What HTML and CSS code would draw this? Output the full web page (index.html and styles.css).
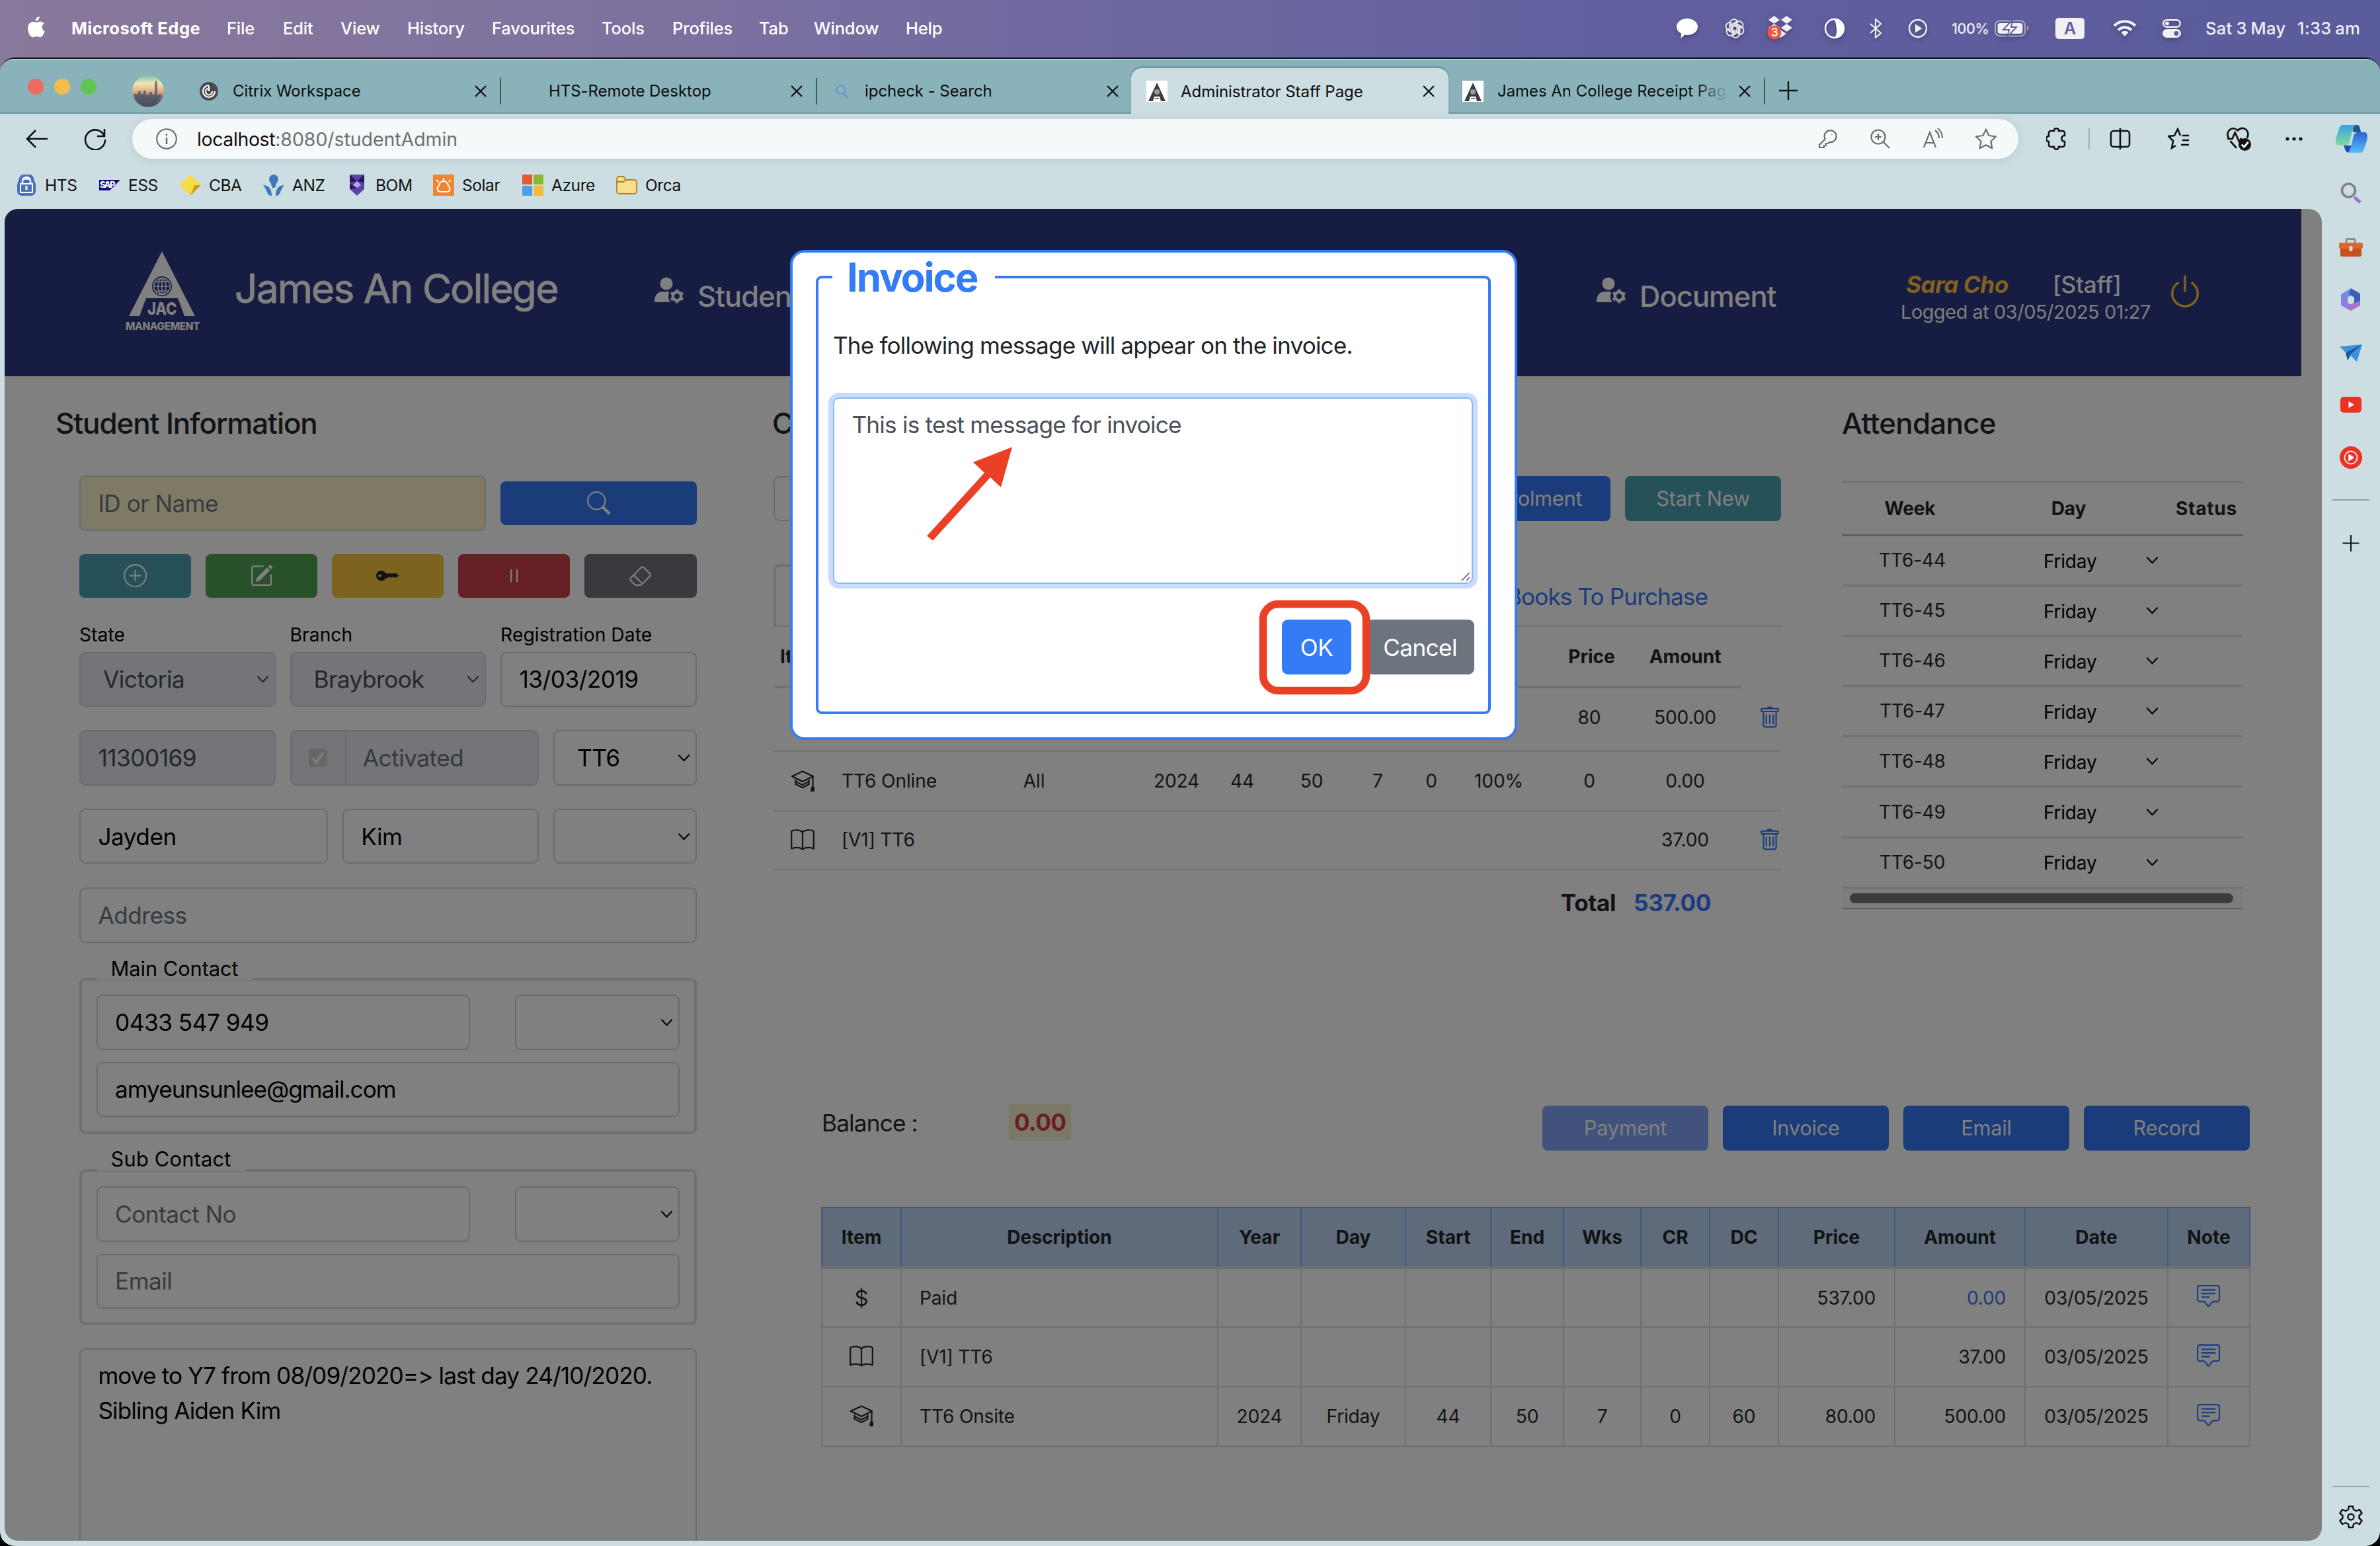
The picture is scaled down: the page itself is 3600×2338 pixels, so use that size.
FILE: index.html
```html
<!DOCTYPE html>
<html lang="en">
<head>
<meta charset="utf-8">
<title>Administrator Staff Page</title>
<link rel="stylesheet" href="styles.css">
</head>
<body>
<svg class="defs" width="0" height="0">
  <symbol id="chev" viewBox="0 0 20 12"><path d="M1.500 1.500 10 10.500 18.500 1.500" fill="none" stroke="currentColor" stroke-width="2.200"/></symbol>
  <symbol id="x" viewBox="0 0 18 18"><path d="M1 1 17 17M17 1 1 17" stroke="currentColor" stroke-width="2.200" fill="none"/></symbol>
  <symbol id="fav" viewBox="0 0 32 32"><path d="M0 0h32v32H0z" fill="#fff"/><path d="M16 3 29 31H22L20 24H12L10 31H3Z" fill="#3c3c3e"/><circle cx="16" cy="17" r="4" fill="#999"/><path d="M13 26h6v2h-6z" fill="#777"/></symbol>
  <symbol id="trash" viewBox="0 0 16 16"><path d="M5.500 5.500A.5.5 0 0 1 6 6v6a.5.5 0 0 1-1 0V6a.5.5 0 0 1 .5-.5zm2.500 0a.5.5 0 0 1 .5.5v6a.5.5 0 0 1-1 0V6a.5.5 0 0 1 .5-.5zm3 .5a.5.5 0 0 0-1 0v6a.5.5 0 0 0 1 0V6z"/><path fill-rule="evenodd" d="M14.500 3a1 1 0 0 1-1 1H13v9a2 2 0 0 1-2 2H5a2 2 0 0 1-2-2V4h-.5a1 1 0 0 1-1-1V2a1 1 0 0 1 1-1H6a1 1 0 0 1 1-1h2a1 1 0 0 1 1 1h3.500a1 1 0 0 1 1 1v1zM4.118 4 4 4.059V13a1 1 0 0 0 1 1h6a1 1 0 0 0 1-1V4.059L11.882 4H4.118zM2.500 3V2h11v1h-11z"/></symbol>
  <symbol id="chat" viewBox="0 0 16 16"><path d="M14 1a1 1 0 0 1 1 1v8a1 1 0 0 1-1 1h-2.500a2 2 0 0 0-1.600.8L8 14.333 6.100 11.800a2 2 0 0 0-1.600-.8H2a1 1 0 0 1-1-1V2a1 1 0 0 1 1-1h12zM2 0a2 2 0 0 0-2 2v8a2 2 0 0 0 2 2h2.500a1 1 0 0 1 .8.4l1.900 2.533a1 1 0 0 0 1.600 0l1.900-2.533a1 1 0 0 1 .8-.4H14a2 2 0 0 0 2-2V2a2 2 0 0 0-2-2H2z"/><path d="M3 3.500a.5.5 0 0 1 .5-.5h9a.5.5 0 0 1 0 1h-9a.5.5 0 0 1-.5-.5zM3 6a.5.5 0 0 1 .5-.5h9a.5.5 0 0 1 0 1h-9A.5.5 0 0 1 3 6zm0 2.500a.5.5 0 0 1 .5-.5h5a.5.5 0 0 1 0 1h-5a.5.5 0 0 1-.5-.5z"/></symbol>
  <symbol id="book" viewBox="0 0 36 32"><path d="M18 4.500C14 .5 5 .5 1.200 3V29.500C6 27 14 27 18 30.500 22 27 30 27 34.800 29.500V3C31 .5 22 .5 18 4.500V30" fill="none" stroke="currentColor" stroke-width="2.200" stroke-linejoin="round"/></symbol>
  <symbol id="cap" viewBox="0 0 36 32"><path d="M18 1.500 34 9 18 17 2 9Z" fill="none" stroke="currentColor" stroke-width="2.400" stroke-linejoin="round"/><path d="M7.500 14V21L18 26 27.500 21V14M7.500 17 18 22 27.500 17M33.500 9V26" fill="none" stroke="currentColor" stroke-width="2.200" stroke-linejoin="round"/><path d="M31 25h5v7h-6z" fill="currentColor"/></symbol>
  <symbol id="ugear" viewBox="0 0 46 40"><circle cx="18" cy="10" r="9.500"/><path d="M0 38C0 27 5 22 12 22H20C24 22 21 24 21 30 21 34 24 38 24 38Z"/><g fill="none" stroke="currentColor"><circle cx="34" cy="29" r="6.200" stroke-width="4.600"/><path d="M34 18.500v21M25 23.700l18 10.500M25 34.300l18-10.500" stroke-width="4.400" stroke-dasharray="4 13 4 0"/></g></symbol>
</svg>

<header class="menubar">
  <svg class="apple" viewBox="0 0 25 31"><path d="M17 0c.3 3.500-2.800 6.800-6 6.600C10.600 3.400 14 .3 17 0zM12.700 8.600c1.500 0 3-1.400 5.600-1.400 2.200 0 4.300 1.200 5.600 3-4.600 2.700-3.900 9.300.9 11.300C23.500 25.300 21 30 18 30.300c-2 .2-3-1.200-5.300-1.200-2.200 0-3.300 1.300-5.200 1.300C3.700 30.400 0 23.600 0 17.500 0 11 3.900 7.500 7.500 7.500c2.200 0 3.800 1.100 5.200 1.100z" fill="#fff"/></svg>
  <b>Microsoft Edge</b><span>File</span><span>Edit</span><span>View</span><span>History</span><span>Favourites</span><span>Tools</span><span>Profiles</span><span>Tab</span><span>Window</span><span>Help</span>
  <div class="tray">
    <svg style="width:32px" viewBox="0 0 32 32"><path d="M16 1C25 1 32 6.500 32 13.500S25 26 16 26c-1.500 0-3-.2-4-.5C10 28 7.500 30 5.500 31 7 28.500 7.300 26 7 23.500 2.500 21.500 0 17.500 0 13.500 0 6.500 7 1 16 1z" fill="#fff"/></svg>
    <svg style="width:32px" viewBox="0 0 32 32" fill="none" stroke="#eee" stroke-width="1.800" stroke-linejoin="round"><g id="p"><path d="M8.500 21V8.500A6.500 6.500 0 0 1 20 4.500M12.500 18.300V11.500L21.500 6.300"/></g><use href="#p" transform="rotate(60 16 16)"/><use href="#p" transform="rotate(120 16 16)"/><use href="#p" transform="rotate(180 16 16)"/><use href="#p" transform="rotate(240 16 16)"/><use href="#p" transform="rotate(300 16 16)"/></svg>
    <svg style="width:40px" viewBox="0 0 40 38" fill="#f1f0f6"><path d="M10.500 0 19 6 10.500 12 2 6ZM29.500 0 38 6 29.500 12 21 6ZM29.500 12 38 18 29.500 24 21 18ZM10.500 12 19 18 10.500 24 2 18ZM20 21l9 6-9 6-8-6z"/><circle cx="11" cy="25" r="10.500" fill="#f1573b"/><text x="11" y="31" font-size="17" font-weight="600" fill="#fff" text-anchor="middle">3</text></svg>
    <svg style="width:32px" viewBox="0 0 32 32"><circle cx="16" cy="16" r="14" fill="none" stroke="#fff" stroke-width="2.400"/><path d="M16 2a14 14 0 0 1 0 28C19 26 20 20 18.500 13 18 8 16.500 5 16 2z" fill="#fff"/></svg>
    <svg style="width:18px" viewBox="0 0 18 30"><path d="M1 8 17 22 9 29V1L17 8 1 22" fill="none" stroke="#eee" stroke-width="2.300"/></svg>
    <svg style="width:30px" viewBox="0 0 30 30"><circle cx="15" cy="15" r="13" fill="none" stroke="#eee" stroke-width="2.400"/><path d="M11 8.500 21.500 15 11 21.500Z" fill="#eee"/></svg>
    <span class="pct">100%</span>
    <svg style="width:53px" viewBox="0 0 53 26"><rect x="1" y="1.500" width="45" height="23" rx="7" fill="none" stroke="#a9a7cd" stroke-width="2"/><rect x="4.500" y="5" width="38" height="16" rx="4" fill="#f1f0f6"/><path d="M49 9c3 1 3 7 0 8z" fill="#a9a7cd"/><path d="M27 0 13 15H22L19 26 33 11H25Z" fill="#fff" stroke="#5f5e9f" stroke-width="2"/></svg>
    <span class="abox">A</span>
    <svg style="width:36px" viewBox="0 0 36 27" fill="none" stroke="#f1f0f6" stroke-width="4.200"><path d="M2 10C11 1 25 1 34 10M8 16.500C13.500 11 22.500 11 28 16.500"/><path d="M12.500 20C15.500 17 20.500 17 23.500 20L18 26Z" fill="#f1f0f6" stroke="none"/></svg>
    <svg style="width:28px" viewBox="0 0 28 28"><rect x="1.200" y="1.200" width="25.500" height="10.500" rx="5.200" fill="none" stroke="#f1f0f6" stroke-width="2.400"/><circle cx="7" cy="6.500" r="3" fill="#f1f0f6"/><rect y="15" width="28" height="13" rx="6.500" fill="#f1f0f6"/><circle cx="21" cy="21.500" r="3.500" fill="#5d5c9c"/></svg>
    <span class="clock">Sat 3 May</span><span class="clock">1:33 am</span>
  </div>
</header>

<div class="window">
  <div class="tabs">
    <div class="lights"><i class="r"></i><i class="y"></i><i class="g"></i></div>
    <svg class="avatar" viewBox="0 0 48 48"><defs><linearGradient id="sky" x2="0" y2="1"><stop offset="0" stop-color="#7cc0ac"/><stop offset=".25" stop-color="#f3e6b0"/><stop offset=".5" stop-color="#dcb188"/><stop offset=".75" stop-color="#6b6672"/><stop offset="1" stop-color="#444b66"/></linearGradient></defs><circle cx="24" cy="24" r="24" fill="url(#sky)"/><path d="M3 28h6v-4h4v4h4v-5h4v6h5v-4h4v4h4V12l2-5 2 5v18l6-2v4L34 44H14L4 34Z" fill="#4b4d60" opacity=".7"/></svg>
    <div class="tab t1"><svg viewBox="0 0 28 28"><circle cx="14" cy="14" r="14" fill="#4a4a4e"/><path d="M14 5a9 9 0 1 0 9 9M14 9.500a5 5 0 1 0 5 4.500M14 6v8" fill="none" stroke="#fff" stroke-width="2.200"/></svg><span>Citrix Workspace</span><svg class="close"><use href="#x"/></svg></div>
    <div class="tab t2"><i></i><span>HTS-Remote Desktop</span><svg class="close"><use href="#x"/></svg></div>
    <div class="tab t3"><svg viewBox="0 0 20 20"><circle cx="8" cy="8" r="6" fill="none" stroke="#6a9cc8" stroke-width="2.400"/><path d="m12 13 6 6" stroke="#6a9cc8" stroke-width="2.800"/></svg><span>ipcheck - Search</span><svg class="close"><use href="#x"/></svg></div>
    <div class="tab t4"><svg><use href="#fav"/></svg><span>Administrator Staff Page</span><svg class="close"><use href="#x"/></svg></div>
    <div class="tab t5"><svg><use href="#fav"/></svg><span>James An College Receipt Page</span><svg class="close"><use href="#x"/></svg></div>
    <svg class="plus" viewBox="0 0 28 28"><path d="M14 0V28M0 14H28" stroke="#111" stroke-width="2.400"/></svg>
  </div>

  <div class="toolbar">
    <svg class="back" viewBox="0 0 34 28"><path d="M15 1 2 14 15 27M2 14H33" fill="none" stroke="#111" stroke-width="2.600"/></svg>
    <svg class="reload" viewBox="0 0 34 34"><path d="M31 13A15 15 0 1 0 32 18M31 2V13H20" fill="none" stroke="#111" stroke-width="2.600"/></svg>
    <div class="address">
      <svg style="width:32px" viewBox="0 0 32 32"><circle cx="16" cy="16" r="14.800" fill="none" stroke="#666" stroke-width="2"/><path d="M16 14v10M16 8.500v2.500" stroke="#666" stroke-width="2.400"/></svg>
      <span class="url">localhost<em>:8080/studentAdmin</em></span>
      <div class="acts">
        <svg viewBox="0 0 32 32"><path d="M13 17A9 9 0 1 1 19 21L17 23H14V26H11V29H4V25L13 16M22.500 9.500h1" /></svg>
        <svg viewBox="0 0 32 32"><circle cx="13" cy="13" r="10.500"/><path d="m21 21 9 9M13 8v10M8 13h10"/></svg>
        <svg viewBox="0 0 32 32"><path d="M2 29 11 6 20 29M5 22H17M19 3C23 6 25 10 25 15M23 0C28 4 30 9 30 15"/></svg>
        <svg viewBox="0 0 32 32"><path d="m16 1.500 4.500 9.500 10.500 1.500-7.600 7.300 1.900 10.500L16 25.300 6.700 30.300l1.900-10.500L1 12.500 11.500 11Z" stroke-linejoin="round"/></svg>
      </div>
    </div>
    <div class="tools">
      <svg viewBox="0 0 32 34"><path d="M7 5H12C11 0 20 0 19 5H25A3 3 0 0 1 28 8V12C22 11 22 22 28 21V26A3 3 0 0 1 25 29H19C20 34 11 34 12 29H7A3 3 0 0 1 4 26V21C-1 22-1 12 4 13V8A3 3 0 0 1 7 5Z"/></svg>
      <i></i>
      <svg viewBox="0 0 32 34"><path d="M12 5H6A4 4 0 0 0 2 9V25A4 4 0 0 0 6 29H12M20 5H26A4 4 0 0 1 30 9V25A4 4 0 0 1 26 29H20M16 1V33M12 5h8M12 29h8"/></svg>
      <svg viewBox="0 0 32 34"><path d="M12 27 6 31 8 20 1 13 10 12 15 2 19 12M22 12H32M22 19H32M20 26H32"/></svg>
      <svg viewBox="0 0 36 36"><path d="M4 17C-2 8 9-2 17 6 25-3 36 8 30 17M2 18H9L13 9 19 22 22 17M6 21 15 31"/><circle cx="27" cy="26" r="9" fill="#111" stroke="none"/><path d="m22.500 26 3.500 3.500 6-7" stroke="#fff"/></svg>
      <svg viewBox="0 0 32 32"><g fill="#111" stroke="none"><circle cx="5" cy="16" r="2.600"/><circle cx="15" cy="16" r="2.600"/><circle cx="25" cy="16" r="2.600"/></g></svg>
      <svg class="copilot" viewBox="0 0 48 42"><defs><linearGradient id="ca" x2="0" y2="1"><stop offset="0" stop-color="#3d9fe0"/><stop offset="1" stop-color="#7fdca0"/></linearGradient><linearGradient id="cb" x2="0" y2="1"><stop offset="0" stop-color="#2b62d2"/><stop offset="1" stop-color="#58bff8"/></linearGradient></defs><path d="M25 0H33C36 0 37 5 38 11H26Z" fill="#1d5c8f"/><path d="M12 31H24L20 42C15 42 14 36 12 31Z" fill="#1f46c4"/><path d="M12 0H30C26 3 25 8 23 17 21 26 20 31 14 31H5C0 31-1 26 1 18L5 6C6 2 8 0 12 0Z" fill="url(#ca)"/><path d="M36 42H18C22 39 23 34 25 25 27 16 28 11 34 11H43C48 11 49 16 47 24L43 36C42 40 40 42 36 42Z" fill="url(#cb)"/></svg>
    </div>
  </div>

  <nav class="bookmarks">
    <a><svg viewBox="0 0 32 32"><rect x="2" y="8" width="28" height="24" rx="7" fill="#4d6fbe"/><path d="M7 14V10a9 9 0 0 1 18 0v4" fill="none" stroke="#4d6fbe" stroke-width="6"/><path d="M10 14v-4a6 6 0 0 1 12 0v4" fill="none" stroke="#fff" stroke-width="2.500"/><rect x="7" y="14" width="18" height="13" fill="none" stroke="#fff" stroke-width="2"/><path d="M16 17v6" stroke="#fff" stroke-width="3"/></svg>HTS</a>
    <a><svg viewBox="0 0 32 32"><path d="M0 8H32L16 24H0Z" fill="#10107c"/><text x="1" y="20" font-size="13" font-weight="800" fill="#fff" textLength="23">SAP</text></svg>ESS</a>
    <a><svg viewBox="0 0 32 32"><path d="M16 0 32 16 16 32 0 16Z" fill="#f7dc45"/><path d="M32 16 16 32 22 16Z" fill="#cf9a2c"/></svg>CBA</a>
    <a><svg viewBox="0 0 32 32" fill="#3b7ab8"><circle cx="16" cy="7" r="7"/><path d="M11 11h10L18 20H14ZM0 16C8 16 13 21 13 32 5 32 7 24 0 16ZM32 16C24 16 19 21 19 32 27 32 25 24 32 16Z"/></svg>ANZ</a>
    <a><svg viewBox="0 0 32 32"><path d="M5 0H27V22L16 32 5 22Z" fill="#5b43a8"/><path d="M5 0 16 10 5 12ZM27 0 16 10 27 12ZM5 14 16 20 5 22Z" fill="#2a1658"/><path d="M16 10 22 16 16 20 10 16Z" fill="#b7a5ee"/></svg>BOM</a>
    <a><svg viewBox="0 0 32 32"><path d="M0 0h32v32H0z" fill="#f08433"/><path d="M10 26a5 5 0 0 1-1-9 7 7 0 0 1 14 0 5 5 0 0 1-1 9ZM16 9V5M8 11 5 8M24 11l3-3" fill="none" stroke="#fff" stroke-width="2"/></svg>Solar</a>
    <a><svg viewBox="0 0 32 32"><path d="M0 0h15v15H0z" fill="#e15b31"/><path d="M17 0h15v15H17z" fill="#89b82f"/><path d="M0 17h15v15H0z" fill="#4a9fe8"/><path d="M17 17h15v15H17z" fill="#f3b83c"/></svg>Azure</a>
    <a><svg viewBox="0 0 32 32"><path d="M1 7A4 4 0 0 1 5 3H11L15 8H27A4 4 0 0 1 31 12V25A4 4 0 0 1 27 29H5A4 4 0 0 1 1 25Z" fill="#f9df8c" stroke="#a8822b" stroke-width="1.800"/><path d="M1 11H11L15 8" fill="none" stroke="#a8822b" stroke-width="1.800"/></svg>Orca</a>
  </nav>

  <div class="lower">
    <div class="page">
      <header class="site">
        <svg class="logo" viewBox="0 0 116 128"><path d="M57 0 107 98H91L81 71H33L23 98H7Z" fill="#808080"/><circle cx="57" cy="53" r="15" fill="#171c42"/><g fill="none" stroke="#808080" stroke-width="1.600"><circle cx="57" cy="53" r="12.500"/><ellipse cx="57" cy="53" rx="6" ry="12.500"/><path d="M57 40v26M44 53h26M47 46h20M47 60h20"/></g><text x="35" y="96" font-size="26" font-weight="800" textLength="44" lengthAdjust="spacingAndGlyphs" fill="#808080">JAC</text><text x="2" y="119" font-size="16" font-weight="800" textLength="112" lengthAdjust="spacingAndGlyphs" fill="#808080">MANAGEMENT</text></svg>
        <h1>James An College</h1>
        <div class="nav n1"><svg><use href="#ugear"/></svg>Student</div>
        <div class="nav n2"><svg><use href="#ugear"/></svg>Document</div>
        <div class="who"><p><b>Sara Cho</b><span>[Staff]</span></p><small>Logged at 03/05/2025 01:27</small></div>
        <svg class="power" viewBox="0 0 16 16"><path d="M7.500 1v7h1V1h-1z"/><path d="M3 8.812a4.999 4.999 0 0 1 2.578-4.375l-.485-.874A6 6 0 1 0 11 3.616l-.501.865A5 5 0 1 1 3 8.812z"/></svg>
      </header>

      <main>
        <section class="student">
          <h2>Student Information</h2>
          <div class="form">
            <div class="row search"><div class="in ph idn">ID or Name</div><button class="b blue"><svg viewBox="0 0 16 16"><path d="M11.742 10.344a6.500 6.500 0 1 0-1.397 1.398h-.001c.03.04.062.078.098.115l3.850 3.850a1 1 0 0 0 1.415-1.414l-3.850-3.850a1.007 1.007 0 0 0-.115-.1zM12 6.500a5.500 5.500 0 1 1-11 0 5.500 5.500 0 0 1 11 0z"/></svg></button></div>
            <div class="row acts5">
              <button class="b teal"><svg viewBox="0 0 16 16"><path d="M8 15A7 7 0 1 1 8 1a7 7 0 0 1 0 14zm0 1A8 8 0 1 0 8 0a8 8 0 0 0 0 16z"/><path d="M8 4a.5.5 0 0 1 .5.5v3h3a.5.5 0 0 1 0 1h-3v3a.5.5 0 0 1-1 0v-3h-3a.5.5 0 0 1 0-1h3v-3A.5.5 0 0 1 8 4z"/></svg></button>
              <button class="b green"><svg viewBox="0 0 16 16"><path d="M15.502 1.940a.5.5 0 0 1 0 .706L14.459 3.690l-2-2L13.502.646a.5.5 0 0 1 .707 0l1.293 1.293zm-1.750 2.456-2-2L4.939 9.210a.5.5 0 0 0-.121.196l-.805 2.414a.25.25 0 0 0 .316.316l2.414-.805a.5.5 0 0 0 .196-.12l6.813-6.814z"/><path fill-rule="evenodd" d="M1 13.500A1.500 1.500 0 0 0 2.500 15h11a1.500 1.500 0 0 0 1.500-1.500v-6a.5.5 0 0 0-1 0v6a.5.5 0 0 1-.5.5h-11a.5.5 0 0 1-.5-.5v-11a.5.5 0 0 1 .5-.5H9a.5.5 0 0 0 0-1H2.500A1.500 1.500 0 0 0 1 2.500v11z"/></svg></button>
              <button class="b amber"><svg viewBox="0 0 16 16"><path d="M3.500 11.500a3.500 3.500 0 1 1 3.163-5H14L15.500 8 14 9.500l-1-1-1 1-1-1-1 1-1-1-1 1H6.663a3.500 3.500 0 0 1-3.163 2zM2.500 9a1 1 0 1 0 0-2 1 1 0 0 0 0 2z"/></svg></button>
              <button class="b red"><svg viewBox="0 0 16 16"><path d="M6 3.500a.5.5 0 0 1 .5.5v8a.5.5 0 0 1-1 0V4a.5.5 0 0 1 .5-.5zm4 0a.5.5 0 0 1 .5.5v8a.5.5 0 0 1-1 0V4a.5.5 0 0 1 .5-.5z"/></svg></button>
              <button class="b slate"><svg viewBox="0 0 16 16"><path d="M8.086 2.207a2 2 0 0 1 2.828 0l3.879 3.879a2 2 0 0 1 0 2.828l-5.500 5.500A2 2 0 0 1 7.879 15H5.120a2 2 0 0 1-1.414-.586l-2.500-2.500a2 2 0 0 1 0-2.828l6.879-6.879zm2.121.707a1 1 0 0 0-1.414 0L4.160 7.547l5.293 5.293 4.633-4.633a1 1 0 0 0 0-1.414l-3.879-3.879zM8.746 13.547 3.453 8.254 1.914 9.793a1 1 0 0 0 0 1.414l2.500 2.500a1 1 0 0 0 .707.293H7.880a1 1 0 0 0 .707-.293l.16-.16z"/></svg></button>
            </div>
            <div class="row three labels"><label>State</label><label>Branch</label><label>Registration Date</label></div>
            <div class="row three"><div class="in sel off">Victoria<svg><use href="#chev"/></svg></div><div class="in sel off">Braybrook<svg><use href="#chev"/></svg></div><div class="in">13/03/2019</div></div>
            <div class="row ids"><div class="in off">11300169</div><div class="in off grp"><span class="box"><svg viewBox="0 0 28 28"><rect width="28" height="28" rx="5" fill="#646668"/><path d="m6 15 5.500 6L22 6" fill="none" stroke="#7c7d7f" stroke-width="4"/></svg></span><span class="dim">Activated</span></div><div class="in sel">TT6<svg><use href="#chev"/></svg></div></div>
            <div class="row names"><div class="in">Jayden</div><div class="in">Kim</div><div class="in sel"><svg><use href="#chev"/></svg></div></div>
            <div class="row addr"><div class="in ph">Address</div></div>
            <div class="group g1"><label>Main Contact</label><div class="row pair"><div class="in">0433 547 949</div><div class="in sel"><svg><use href="#chev"/></svg></div></div><div class="in mail">amyeunsunlee@gmail.com</div></div>
            <div class="group g2"><label>Sub Contact</label><div class="row pair"><div class="in ph">Contact No</div><div class="in sel"><svg><use href="#chev"/></svg></div></div><div class="in ph">Email</div></div>
            <div class="memo">move to Y7 from 08/09/2020=&gt; last day 24/10/2020.<br>Sibling Aiden Kim</div>
          </div>
        </section>

        <div class="right">
          <div class="upper">
            <section class="course">
              <h2>Course</h2>
              <div class="bar"><div class="in small"></div><button class="b blue enr">Enrolment</button><button class="b teal start">Start New</button></div>
              <div class="subtabs"><div class="subtab"></div><a>Books To Purchase</a></div>
              <div class="hd"><b class="it">Item</b><b class="pr">Price</b><b class="am">Amount</b></div>
              <div class="er first"><span></span><span></span><span></span><span></span><span></span><span></span><span></span><span></span><span></span><span></span><span>80</span><span>500.00</span><span class="tr"><svg><use href="#trash"/></svg></span></div>
              <div class="er"><span><svg><use href="#cap"/></svg></span><span class="l">TT6 Online</span><span>All</span><span></span><span>2024</span><span>44</span><span>50</span><span>7</span><span>0</span><span>100%</span><span>0</span><span>0.00</span></div>
              <div class="er"><span><svg><use href="#book"/></svg></span><span class="l">[V1] TT6</span><span></span><span></span><span></span><span></span><span></span><span></span><span></span><span></span><span></span><span>37.00</span><span class="tr"><svg><use href="#trash"/></svg></span></div>
              <div class="total"><b>Total</b><b class="v">537.00</b></div>
            </section>
            <section class="attend">
              <h2>Attendance</h2>
              <div class="at head"><b>Week</b><b>Day</b><b></b><b>Status</b></div>
              <div class="at"><span>TT6-44</span><span class="d">Friday</span><svg><use href="#chev"/></svg></div>
              <div class="at"><span>TT6-45</span><span class="d">Friday</span><svg><use href="#chev"/></svg></div>
              <div class="at"><span>TT6-46</span><span class="d">Friday</span><svg><use href="#chev"/></svg></div>
              <div class="at"><span>TT6-47</span><span class="d">Friday</span><svg><use href="#chev"/></svg></div>
              <div class="at"><span>TT6-48</span><span class="d">Friday</span><svg><use href="#chev"/></svg></div>
              <div class="at"><span>TT6-49</span><span class="d">Friday</span><svg><use href="#chev"/></svg></div>
              <div class="at"><span>TT6-50</span><span class="d">Friday</span><svg><use href="#chev"/></svg></div>
              <div class="track"><i></i></div>
            </section>
          </div>
          <section class="billing">
            <div class="balance"><span>Balance :</span><b>0.00</b><div class="btns"><button class="b pay">Payment</button><button class="b blue">Invoice</button><button class="b blue">Email</button><button class="b blue">Record</button></div></div>
            <table>
              <colgroup><col style="width:120px"><col style="width:479px"><col style="width:126px"><col style="width:158px"><col style="width:129px"><col style="width:110px"><col style="width:117px"><col style="width:104px"><col style="width:104px"><col style="width:176px"><col style="width:197px"><col style="width:216px"><col style="width:124px"></colgroup>
              <thead><tr><th>Item</th><th>Description</th><th>Year</th><th>Day</th><th>Start</th><th>End</th><th>Wks</th><th>CR</th><th>DC</th><th>Price</th><th>Amount</th><th>Date</th><th>Note</th></tr></thead>
              <tbody>
                <tr><td class="dollar">$</td><td class="l">Paid</td><td></td><td></td><td></td><td></td><td></td><td></td><td></td><td class="n">537.00</td><td class="n link">0.00</td><td>03/05/2025</td><td class="link"><svg><use href="#chat"/></svg></td></tr>
                <tr><td><svg><use href="#book"/></svg></td><td class="l">[V1] TT6</td><td></td><td></td><td></td><td></td><td></td><td></td><td></td><td></td><td class="n">37.00</td><td>03/05/2025</td><td class="link"><svg><use href="#chat"/></svg></td></tr>
                <tr><td><svg><use href="#cap"/></svg></td><td class="l">TT6 Onsite</td><td>2024</td><td>Friday</td><td>44</td><td>50</td><td>7</td><td>0</td><td>60</td><td class="n">80.00</td><td class="n">500.00</td><td>03/05/2025</td><td class="link"><svg><use href="#chat"/></svg></td></tr>
              </tbody>
            </table>
          </section>
        </div>
      </main>
    </div>

    <aside class="side">
      <svg style="height:32px;margin-top:-40px" viewBox="0 0 32 32"><circle cx="12.500" cy="12" r="10" fill="none" stroke="#818181" stroke-width="3.600"/><path d="m21 22 9 8" stroke="#9b74cf" stroke-width="5"/></svg>
      <svg style="height:28px;margin-top:52px" viewBox="0 0 36 28"><path d="M11 7V3Q11 1.500 13 1.500H22Q24 1.500 24 3V7" fill="none" stroke="#8d8d8d" stroke-width="3"/><rect x="2" y="7" width="32" height="21" rx="2.500" fill="#c8501e"/><rect y="7" width="36" height="9" rx="2" fill="#d96a2c"/><rect x="15.500" y="12" width="5" height="8" rx="2" fill="#d9d9d9"/></svg>
      <svg style="height:34px;margin-top:48px" viewBox="0 0 34 34"><path d="M17 0 31 8V17L22 13.500 17 11 12 13.500V22L2 27V9Z" fill="#6e8fe0"/><path d="M2 9 12 13.500V22L22 26 17 34 2 26Z" fill="#8a7fe0"/><path d="M31 9V26L17 34 7 28 17 25 22 21V13Z" fill="#a874cf"/><path d="M17 0 31 8V19L22 22V13.500L14 9Z" fill="#3d60b4"/><path d="M17 11.500 22 14V20.500L17 23.500 12 20.500V14Z" fill="#cddee2"/></svg>
      <svg style="height:26px;margin-top:51px" viewBox="0 0 34 26"><path d="M0 3 34 0 26 26 17 17 12 24 9 12Z" fill="#3a93dc"/><path d="M34 0 9 12 12 24 16 15Z" fill="#1c5aa0"/></svg>
      <svg style="height:24px;margin-top:53px" viewBox="0 0 32 24"><rect width="32" height="24" rx="5" fill="#ea3323"/><path d="M12.500 7 21 12 12.500 17Z" fill="#fff"/></svg>
      <svg style="height:34px;margin-top:51px" viewBox="0 0 32 32"><circle cx="16" cy="16" r="16" fill="#ea3323"/><circle cx="16" cy="16" r="9" fill="none" stroke="#fff" stroke-width="1.600"/><path d="M12.500 10.500 21 16 12.500 21.500Z" fill="#fff"/></svg>
      <i style="margin-top:46px"></i>
      <svg style="height:25px;margin-top:52px" viewBox="0 0 25 25"><path d="M12.500 0V25M0 12.500H25" stroke="#111" stroke-width="2"/></svg>
      <i class="push"></i>
      <svg style="height:36px;margin:27px 0 18px" viewBox="0 0 36 36"><path d="m15 2 6 0 1 5 4 2 5-2 3.500 5.500-4 3.500v4l4 3.500L31 29l-5-2-4 2-1 5h-6l-1-5-4-2-5 2-3.500-5.500 4-3.500v-4l-4-3.500L5 7l5 2 4-2Z" fill="none" stroke="#111" stroke-width="2.400" stroke-linejoin="round"/><circle cx="18" cy="18" r="4.500" fill="none" stroke="#111" stroke-width="2.400"/></svg>
    </aside>
  </div>
</div>

<div class="modal">
  <div class="inner">
    <h3>Invoice</h3>
    <p>The following message will appear on the invoice.</p>
    <div class="area">This is test message for invoice<svg viewBox="0 0 14 14"><path d="M1 13 13 1M8 13 13 8" stroke="#555" stroke-width="1.500"/></svg></div>
    <div class="foot"><button class="ok">OK</button><button class="cancel">Cancel</button></div>
  </div>
</div>
<svg class="marks" viewBox="1390 660 700 400"><path d="M1402 810.500 1489 715 1472 699 1531 676 1514 737 1498 722 1411 817.500Z" fill="#ea4025"/><rect x="1910.500" y="913.500" width="156" height="131" rx="23" fill="none" stroke="#ea4025" stroke-width="11.500"/></svg>
</body>
</html>
```
FILE: styles.css
```css
* { box-sizing: border-box; }
body {
  margin: 0; width: 3600px; height: 2338px; overflow: hidden; position: relative; fill: currentColor;
  font-family: Inter, "Liberation Sans", sans-serif; font-size: 35.2px; letter-spacing: -0.012em;
  background: linear-gradient(90deg, #89799b 0, #7c70a0 30%, #6b67a0 50%, #605e9f 70%, #5b5c9b 100%) 0 0 / 100% 400px no-repeat #000;
}
.defs { position: absolute; }
svg { display: block; flex: none; }
button { font: inherit; letter-spacing: inherit; border: 0; padding: 0; }
h1, h2, h3, p { margin: 0; }
i, em { font-style: normal; }

/* system menu bar */
.menubar {
  height: 87px; color: #fff; font-size: 25.500px; padding: 0 0 2px 42px;
  display: grid; align-items: center;
  grid-template-columns: 66px 235px 85px 87px 101px 128px 166px 107px 131px 83px 139px 1166px 1fr;
}
.menubar > span { font-weight: 500; letter-spacing: -.007em; }
.menubar b { font-weight: 700; letter-spacing: .019em; }
.apple { width: 26px; height: 32px; margin-top: -3px; }
.tray { display: grid; align-items: center; height: 85px; color: #f1f0f6; grid-template-columns: 72px 65px 86px 69px 58px 66px 65px 92px 87px 75px 65px 139px 100px; }
.tray svg { height: auto; filter: drop-shadow(0 3px 3px rgba(0,0,0,.25)); }
.pct { font-size: 21.500px; font-weight: 500; letter-spacing: -.02em; }
.abox { width: 44px; height: 32px; border-radius: 5px; background: #f1f0f6; color: #5d5c9c; font-weight: 600; font-size: 25px; line-height: 33px; text-align: center; }
.clock { font-weight: 500; font-size: 25.500px; white-space: nowrap; letter-spacing: .012em; word-spacing: -.05em; }

/* browser window */
.window { height: 2251px; border-radius: 22px; overflow: hidden; background: #cddee2; border-top: 2px solid #111; display: flex; flex-direction: column; }
.tabs { height: 83px; background: #89b2bb; border-top: 2px solid #b5d2d9; border-bottom: 2px solid #6c959d; display: flex; align-items: flex-start; font-size: 24px; color: #0b0d0e; letter-spacing: -.002em; }
.lights { display: flex; gap: 16px; padding: 28px 0 0 42px; width: 200px; }
.lights i { width: 24px; height: 24px; border-radius: 50%; }
.r { background: #ec6a5e; } .y { background: #f4be4f; } .g { background: #61c454; }
.avatar { width: 48px; height: 48px; margin: 23px 54px 0 0; }
.tab { display: grid; height: 69px; margin-top: 12px; align-items: center; align-content: center; white-space: nowrap; }
.tab > svg:first-child { width: 32px; height: 32px; }
.tab .close { width: 18px; height: 18px; }
.t1 { width: 456px; grid-template-columns: 50px 366px 1fr; }
.tab.t1 > svg:first-child { width: 28px; height: 28px; }
.t2 { width: 478px; grid-template-columns: 72px 366px 1fr; }
.t3 { width: 475px; grid-template-columns: 72px 366px 1fr; }
.tab.t3 > svg:first-child { width: 22px; height: 24px; margin-left: 27px; }
.t1, .t2, .t5 { background: linear-gradient(#3f555a, #3f555a) right center / 2px 40px no-repeat; }
.t4 { width: 480px; height: 70px; background: #cddee2; border-radius: 16px 16px 0 0; grid-template-columns: 52px 366px 1fr; padding-left: 23px; box-shadow: 0 -2px 3px rgba(50,90,100,.4); }
.t5 { width: 479px; grid-template-columns: 53px 365px 1fr; padding-left: 21px; }
.t5 span { width: 352px; overflow: hidden; -webkit-mask-image: linear-gradient(90deg, #000 85%, transparent 99%); mask-image: linear-gradient(90deg, #000 85%, transparent 99%); }
.plus { width: 28px; height: 28px; margin: 32px 0 0 21px; }

.toolbar { height: 76px; display: flex; align-items: center; }
.back { width: 34px; height: 28px; margin-left: 39px; }
.reload { width: 34px; height: 34px; margin: 0 39px 0 54px; }
.address { width: 2853px; height: 60px; border-radius: 30px; background: #f5f9fa; display: flex; align-items: center; padding: 0 33px 0 36px; box-shadow: 0 2px 12px rgba(90,130,140,.18); }
.url { margin-left: 30px; font-size: 28.500px; color: #111; letter-spacing: -.014em; }
.url em { color: #6e7070; letter-spacing: -.002em; }
.acts { margin-left: auto; display: flex; gap: 48px; color: #6b6e70; }
.acts svg, .tools svg { width: 32px; height: 34px; fill: none; stroke: currentColor; stroke-width: 2.200; }
.tools { display: grid; align-items: center; grid-template-columns: 64px 32px 88px 88px 88px 78px 1fr; padding-left: 42px; color: #111; }
.tools svg { stroke-width: 2.600; }
.tools i { width: 2px; height: 32px; background: #9fb0b4; }
.tools svg:nth-child(5) { width: 38px; height: 38px; }
.tools .copilot { width: 48px; height: 42px; stroke: none; }
.bookmarks { height: 64px; padding-left: 24px; display: grid; align-items: center; grid-template-columns: 126px 122px 126px 126px 131px 135px 142px 120px; font-size: 24.500px; color: #111; }
.bookmarks a { display: flex; align-items: center; gap: 12px; }
.bookmarks svg { width: 32px; height: 32px; }
.lower { flex: 1; display: flex; min-height: 0; padding: 4px 0 8px 7px; }
.side { width: 88px; display: flex; flex-direction: column; align-items: center; }
.side svg { width: 36px; }
.side i { width: 56px; height: 2px; background: #8fa1a5; flex: none; }
.side .push { margin-top: auto; }

/* dimmed page */
.page { width: 3505px; background: #808080; border-radius: 20px; overflow: hidden; color: #111314; }
.site { width: 3474px; height: 253px; background: #171c42; color: #808080; display: flex; align-items: flex-start; }
.site > * { flex: none; }
.logo { width: 116px; height: 128px; margin: 64px 0 0 181px; }
h1 { font-size: 60.500px; font-weight: 400; -webkit-text-stroke: 1px; line-height: 74px; margin: 83px 0 0 51px; width: 635px; letter-spacing: -.03em; }
.nav { font-size: 43.500px; font-weight: 500; line-height: 60px; margin-top: 102px; display: flex; gap: 19px; width: 1425px; letter-spacing: -.022em; }
.nav svg { width: 46px; height: 40px; margin-top: 1px; }
.n2 { width: 450px; }
.who { width: 392px; margin-top: 94px; padding-left: 10px; white-space: nowrap; }
.who p { line-height: 40px; padding-left: 8px; font-weight: 500; letter-spacing: -.01em; }
.who b { display: inline-block; width: 222px; font-style: italic; font-weight: 700; color: #80611d; letter-spacing: -.014em; }
.who small { font-size: 28.800px; display: block; line-height: 44px; letter-spacing: -.014em; }
.power { width: 56px; height: 56px; margin: 97px 0 0 20px; color: #80611d; }

main { display: grid; grid-template-columns: 1046px 1fr; }
h2 { font-size: 44px; font-weight: 500; line-height: 52px; letter-spacing: -.026em; margin-left: -2px; }
.attend h2 { letter-spacing: -.018em; margin-left: 0; }
.student { padding: 45px 0 0 79px; }
.form { margin-left: 34px; width: 933.600px; margin-top: 53px; }
.row { display: grid; margin-bottom: 35px; align-items: center; }
.in { height: 83.600px; border: 2.200px solid #696b6e; border-radius: 9px; padding: 0 26.400px; display: flex; align-items: center; color: #000; white-space: nowrap; letter-spacing: -.014em; }
.mail { letter-spacing: -.028em; }
.ph { color: #363a3f; }
.off { background: #737578; color: #242729; }
.idn { background: #7f7a65; }
.sel { padding-left: 34px; padding-right: 8px; }
.sel svg { width: 19px; height: 12px; margin-left: auto; }
.search { grid-template-columns: 615px 297px; justify-content: space-between; }
.b { height: 66px; border-radius: 8px; display: flex; align-items: center; justify-content: center; color: #808080; font-size: 30.800px; letter-spacing: -.008em; }
.b svg { width: 35.200px; height: 35.200px; }
.blue { background: #1a3c7a; } .teal { background: #265159; } .green { background: #285129; }
.amber { background: #7d6220; color: #111314; } .red { background: #642024; } .slate { background: #383a3d; } .pay { background: #41537d; }
.acts5 { grid-template-columns: repeat(5, 169.200px); justify-content: space-between; margin-bottom: 38px; }
.three { grid-template-columns: repeat(3, 296.500px); justify-content: space-between; }
.labels { margin-bottom: 8px; font-size: 28.160px; line-height: 36px; color: #000; letter-spacing: .003em; }
.ids { grid-template-columns: 296.500px 376px 216.500px; justify-content: space-between; }
.names { grid-template-columns: 375.500px 297px 216.500px; justify-content: space-between; }
.addr { margin-top: 36px; }
.grp { padding: 0; }
.box { width: 83px; height: 100%; border-right: 2.200px solid #696b6e; display: flex; align-items: center; justify-content: center; }
.box svg { width: 28px; height: 28px; }
.dim { padding-left: 25px; color: #363a3f; }
.group { position: relative; height: 236px; border: 4.400px solid #6f6f6f; border-radius: 9px; padding: 21px 21.600px; }
.g1 { margin-top: 53px; }
.g2 { margin-top: 53px; padding-top: 22px; }
.group label { position: absolute; left: 21.600px; top: -36px; height: 35px; line-height: 36px; padding: 0 22px; background: #808080; font-size: 30.800px; color: #000; letter-spacing: -.002em; }
.g2 label { letter-spacing: .006em; top: -37px; height: 36px; }
.pair { grid-template-columns: 565.500px 249px; justify-content: space-between; margin-bottom: 18px; }
.memo { margin-top: 35px; height: 400px; border: 2.200px solid #696b6e; border-radius: 9px; padding: 13px 26.400px; line-height: 52.800px; color: #000; white-space: nowrap; letter-spacing: -.0255em; }

.right { padding-left: 117px; }
.upper { display: flex; gap: 92px; padding-top: 45px; height: 1102px; }
.course { width: 1524px; }
.bar { display: flex; margin-top: 54px; height: 67.600px; }
.bar .b, .btns .b { height: 67.600px; }
.small { height: 67.600px; width: 400px; margin-right: auto; }
.enr { width: 230px; margin-right: 22px; }
.start { width: 236px; }
.subtabs { display: flex; margin-top: 65px; height: 95px; border-bottom: 2.200px solid #717171; }
.subtab { width: 300px; height: 93px; border: solid #6f7072; border-width: 4px 2.200px 0 4px; border-radius: 9px 9px 0 0; }
.subtabs a { margin-left: 809px; margin-top: 23px; line-height: 52px; color: #1a3a7a; white-space: nowrap; letter-spacing: -.026em; }
.hd { position: relative; height: 93px; width: 1463px; border-bottom: 4.400px solid #717171; display: flex; align-items: center; font-size: 28.160px; }
.hd .it { width: 1164px; padding-left: 10px; } .hd .pr { width: 147px; text-align: center; } .hd .am { width: 136px; text-align: center; }
.hd b { letter-spacing: -.004em; padding-top: 1px; }
.er { display: grid; grid-template-columns: 88px 260px 92px 120px 99px 100px 110px 90px 72px 132px 142px 148px 71px; height: 89.600px; align-items: center; text-align: center; font-size: 28.160px; letter-spacing: -.006em; border-bottom: 2.200px solid #717171; }
.er.first { height: 96.500px; padding-bottom: 5px; }
.er svg { width: 36px; height: 32px; margin: 0 auto; }
.er .l { text-align: left; padding-left: 15px; }
.er .tr svg { width: 34px; height: 35.200px; margin: 0 0 0 auto; color: #1a3c7c; }
.total { display: flex; gap: 27px; justify-content: flex-end; padding: 23px 106px 0 0; line-height: 52px; letter-spacing: -.012em; }
.total .v { color: #1b3c80; }
.attend { width: 607px; }
.at { display: grid; grid-template-columns: 213px 264px 1fr; height: 76.100px; border-bottom: 3.600px solid #717171; align-items: center; font-size: 28.160px; letter-spacing: -.006em; padding-bottom: 1px; }
.at > span:first-child { text-align: center; }
.at .d { padding: 3px 0 0 92px; color: #000; letter-spacing: -.01em; }
.at > svg { width: 19px; height: 12px; color: #000; margin-left: -17px; }
.head { grid-template-columns: 206px 274px 13px 114px; height: 83px; border-top: 2.200px solid #717171; border-bottom: 3px solid #5f5f5f; margin-top: 62px; text-align: center; }
.head b:last-child { text-align: right; padding-right: 9px; letter-spacing: .025em; }
.head b { letter-spacing: -.008em; }
.track { height: 31px; background: #7d7d7d; border-bottom: 2px solid #5a5a5a; padding: 7px 15px 0 12px; }
.track i { display: block; height: 15.500px; border-radius: 8px; background: #3b3b3b; }

.billing { margin-left: 72px; width: 2161px; }
.balance { display: flex; align-items: flex-start; height: 154px; line-height: 54px; }
.balance > span { width: 284px; padding-left: 1px; letter-spacing: -.024em; }
.balance > b { background: #7a7968; color: #6b1d22; height: 55px; padding: 0 8px; line-height: 55px; margin-top: -1px; letter-spacing: -.018em; }
.btns { margin-left: auto; display: grid; gap: 22px; grid-template-columns: repeat(4, 251px); margin-top: 1px; }
table { border-collapse: collapse; table-layout: fixed; width: 2160px; font-size: 28.160px; text-align: center; letter-spacing: -.008em; }
th { height: 91px; background: #5f6b7b; border: 2.200px solid #3f5a83; border-bottom: 4.400px solid #6f6f70; padding: 0; letter-spacing: -.002em; }
td { height: 90px; border: 2.200px solid #6f6f70; padding: 0; }
td svg { width: 36px; height: 32px; margin: -3px auto 0; }
td.l { text-align: left; padding-left: 27px; }
td.n { text-align: right; padding-right: 28px; }
td.dollar { font-size: 33px; }
.link { color: #1a3c7c; }
td.link svg { width: 35.200px; height: 35.200px; }

/* invoice dialog */
.modal { position: absolute; left: 1195px; top: 378px; width: 1100px; height: 741px; background: #fff; border: 4.400px solid #367bf6; border-radius: 22px; padding: 35px; color: #212529; }
.inner { position: relative; height: 663px; width: 1021px; border: 4.400px solid #367bf6; border-radius: 9px; padding: 78px 22px 0; }
.inner h3 { position: absolute; left: 21px; top: -39px; padding: 0 22px; width: 246px; line-height: 74px; font-size: 60px; font-weight: 700; color: #367bf6; background: #fff; letter-spacing: -.035em; }
.inner p { line-height: 46px; white-space: nowrap; letter-spacing: -.0245em; }
.area { position: relative; margin-top: 56px; height: 282px; width: 968px; border: 2.200px solid #86b5f9; border-radius: 9px; box-shadow: 0 0 0 7px #c9dcfd; padding: 13px 26.400px; line-height: 52px; color: #495057; white-space: nowrap; letter-spacing: -.0225em; }
.area svg { position: absolute; right: 2px; bottom: 2px; width: 14px; height: 14px; }
.foot { display: flex; justify-content: flex-end; gap: 22px; margin: 54px -1px 0 0; }
.foot button { height: 83px; border-radius: 9px; color: #fff; letter-spacing: -.018em; }
.ok { width: 105px; background: #367bf6; } .cancel { width: 164px; background: #6c757d; }
.marks { position: absolute; left: 1390px; top: 660px; width: 700px; height: 400px; }
```
